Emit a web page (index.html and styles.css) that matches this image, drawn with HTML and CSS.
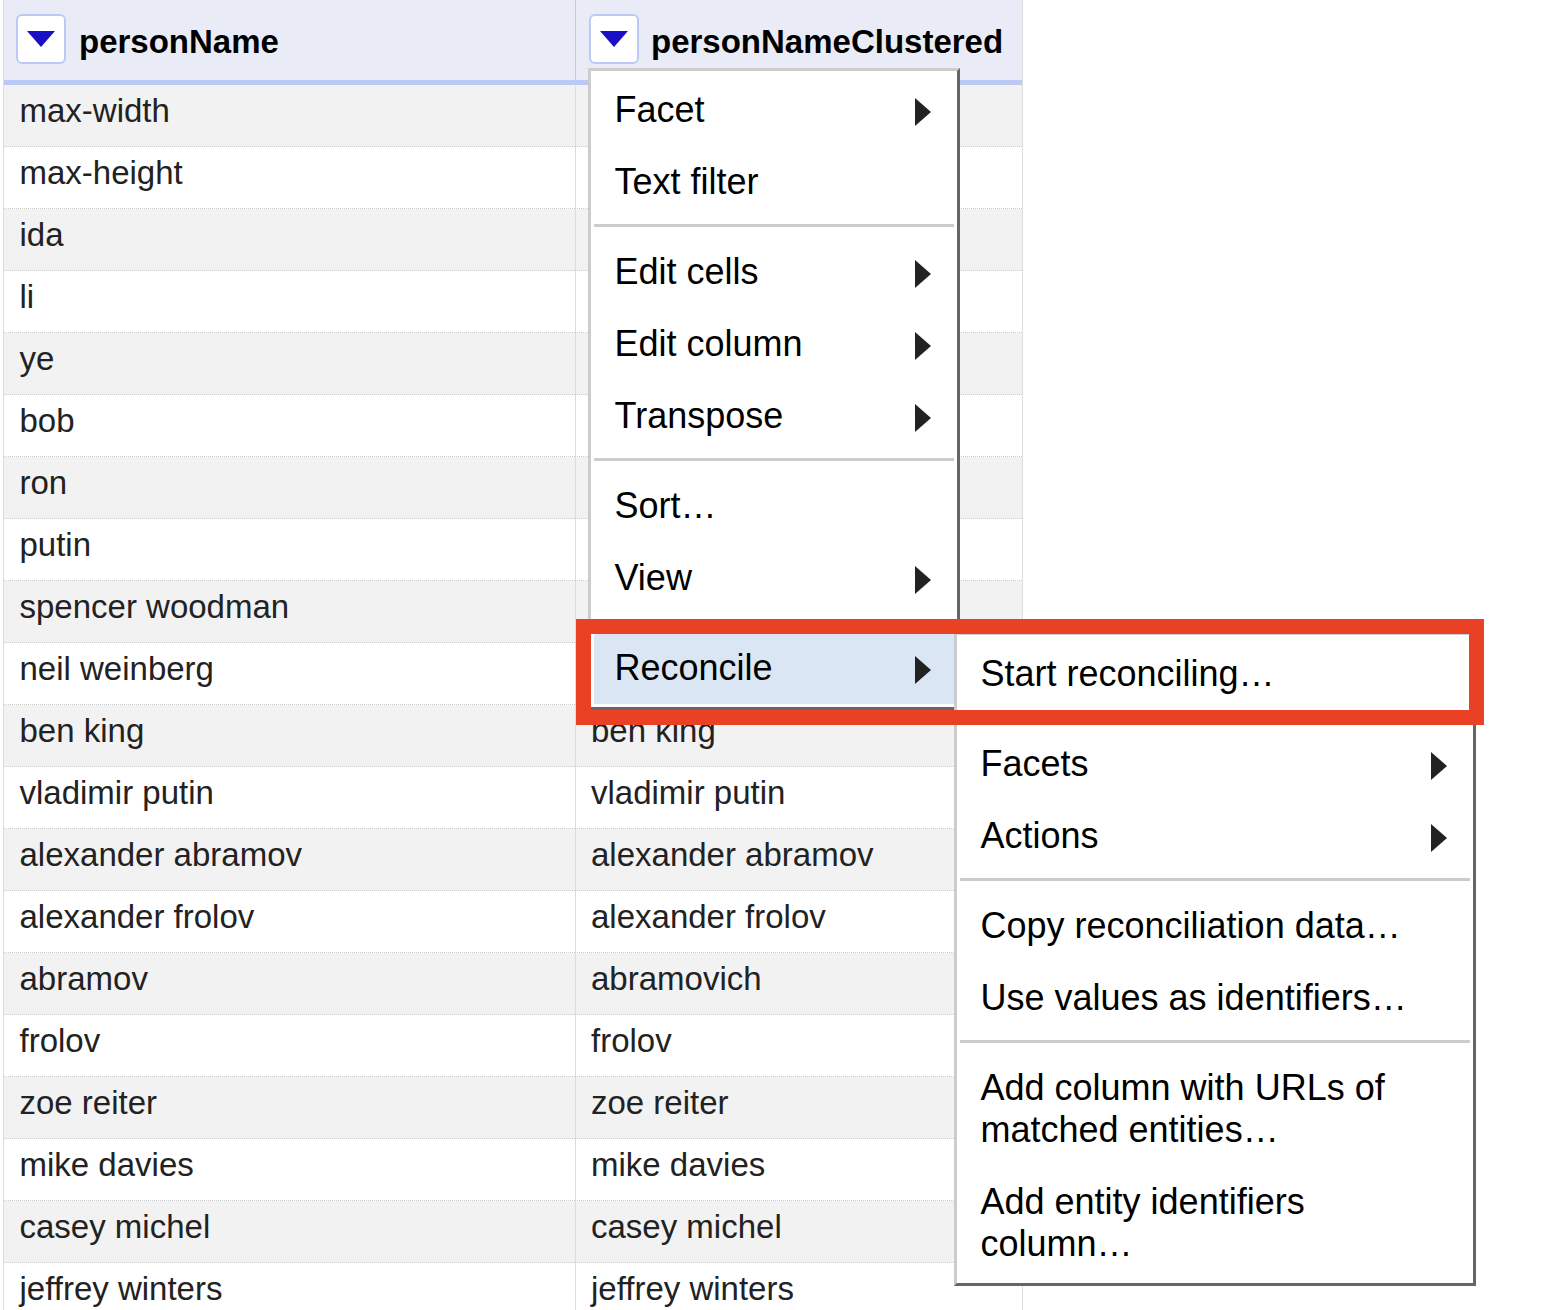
FILE: index.html
```html
<!DOCTYPE html>
<html lang="en">
<head>
<meta charset="utf-8">
<title>Reconcile menu</title>
<link rel="stylesheet" href="styles.css">
</head>
<body>
<div class="page">
  <table class="data">
    <thead>
      <tr>
        <th><div class="head"><span class="dropdown"><svg width="28" height="16" viewBox="0 0 28 16"><polygon points="0,0 28,0 14,16" fill="#1a0fc4"/></svg></span>personName</div></th>
        <th><div class="head head-second"><span class="dropdown"><svg width="28" height="16" viewBox="0 0 28 16"><polygon points="0,0 28,0 14,16" fill="#1a0fc4"/></svg></span>personNameClustered</div></th>
      </tr>
    </thead>
    <tbody>
      <tr><td>max-width</td><td></td></tr>
      <tr><td>max-height</td><td></td></tr>
      <tr><td>ida</td><td></td></tr>
      <tr><td>li</td><td></td></tr>
      <tr><td>ye</td><td></td></tr>
      <tr><td>bob</td><td></td></tr>
      <tr><td>ron</td><td></td></tr>
      <tr><td>putin</td><td></td></tr>
      <tr><td>spencer woodman</td><td></td></tr>
      <tr><td>neil weinberg</td><td></td></tr>
      <tr><td>ben king</td><td>ben king</td></tr>
      <tr><td>vladimir putin</td><td>vladimir putin</td></tr>
      <tr><td>alexander abramov</td><td>alexander abramov</td></tr>
      <tr><td>alexander frolov</td><td>alexander frolov</td></tr>
      <tr><td>abramov</td><td>abramovich</td></tr>
      <tr><td>frolov</td><td>frolov</td></tr>
      <tr><td>zoe reiter</td><td>zoe reiter</td></tr>
      <tr><td>mike davies</td><td>mike davies</td></tr>
      <tr><td>casey michel</td><td>casey michel</td></tr>
      <tr><td>jeffrey winters</td><td>jeffrey winters</td></tr>
    </tbody>
  </table>

  <div class="menu menu-main">
    <div class="item">Facet<svg class="arrow" width="16" height="28" viewBox="0 0 16 28"><polygon points="0,0 16,14 0,28"/></svg></div>
    <div class="item">Text filter</div>
    <div class="sep"></div>
    <div class="item">Edit cells<svg class="arrow" width="16" height="28" viewBox="0 0 16 28"><polygon points="0,0 16,14 0,28"/></svg></div>
    <div class="item">Edit column<svg class="arrow" width="16" height="28" viewBox="0 0 16 28"><polygon points="0,0 16,14 0,28"/></svg></div>
    <div class="item">Transpose<svg class="arrow" width="16" height="28" viewBox="0 0 16 28"><polygon points="0,0 16,14 0,28"/></svg></div>
    <div class="sep"></div>
    <div class="item">Sort…</div>
    <div class="item">View<svg class="arrow" width="16" height="28" viewBox="0 0 16 28"><polygon points="0,0 16,14 0,28"/></svg></div>
    <div class="sep"></div>
    <div class="item active">Reconcile<svg class="arrow" width="16" height="28" viewBox="0 0 16 28"><polygon points="0,0 16,14 0,28"/></svg></div>
  </div>

  <div class="menu menu-sub">
    <div class="item">Start reconciling…</div>
    <div class="sep"></div>
    <div class="item">Facets<svg class="arrow" width="16" height="28" viewBox="0 0 16 28"><polygon points="0,0 16,14 0,28"/></svg></div>
    <div class="item">Actions<svg class="arrow" width="16" height="28" viewBox="0 0 16 28"><polygon points="0,0 16,14 0,28"/></svg></div>
    <div class="sep"></div>
    <div class="item">Copy reconciliation data…</div>
    <div class="item">Use values as identifiers…</div>
    <div class="sep"></div>
    <div class="item wrap">Add column with URLs of matched entities…</div>
    <div class="item wrap">Add entity identifiers column…</div>
  </div>

  <div class="callout"></div>
</div>
</body>
</html>
```
FILE: styles.css
```css
html, body {
  margin: 0;
  padding: 0;
  background: #fff;
}

.page {
  position: relative;
  width: 1554px;
  height: 1310px;
  overflow: hidden;
  font-family: "Liberation Sans", Arial, sans-serif;
}

.data {
  margin-left: 3px;
  width: 1020px;
  table-layout: fixed;
  border-collapse: separate;
  border-spacing: 0;
  border-left: 1px solid #ddd;
  border-right: 1px solid #ddd;
  font-size: 33px;
  color: #222;
}

.data th {
  height: 80px;
  padding: 0;
  background: #e9ecf6;
  border-bottom: 5px solid #bcc9f5;
  color: #000;
  font-weight: bold;
  text-align: left;
}

.data th:first-child {
  width: 571px;
}

.data th + th {
  border-left: 1px solid #bcc9f5;
}

.head {
  display: flex;
  align-items: center;
  gap: 13px;
  padding: 3px 0 0 12px;
}

.head-second {
  gap: 12px;
  padding-left: 13px;
}

.dropdown {
  box-sizing: border-box;
  width: 50px;
  height: 50px;
  margin-bottom: 6px;
  display: flex;
  align-items: center;
  justify-content: center;
  background: #fff;
  border: 2px solid #bcc9f5;
  border-radius: 6px;
}

.data td {
  box-sizing: border-box;
  height: 62px;
  padding: 0 0 10px 15.5px;
  border-bottom: 1px dotted #ccc;
  white-space: nowrap;
}

.data td + td {
  padding-left: 15px;
  border-left: 1px solid #ddd;
}

.data tbody tr:nth-child(odd) td {
  background: #f2f2f2;
}

.menu {
  position: absolute;
  box-sizing: border-box;
  padding: 3px;
  background: #fff;
  border: 3px solid;
  border-color: #ccc #666 #666 #ccc;
  color: #000;
  font-size: 36px;
  line-height: 42px;
}

.menu-main {
  left: 588px;
  top: 68px;
  width: 372px;
}

.menu-sub {
  left: 954px;
  top: 632px;
  width: 522px;
}

.item {
  display: flex;
  align-items: center;
  justify-content: space-between;
  padding: 15px 23px 15px 20.5px;
}

.item.wrap {
  padding-right: 60px;
}

.item.active {
  background: #dbe6f5;
}

.arrow {
  flex: none;
  margin-top: 3px;
  fill: #222;
}

.sep {
  height: 3px;
  margin: 6px 0 9px;
  background: #ccc;
}

.callout {
  position: absolute;
  box-sizing: border-box;
  left: 575.5px;
  top: 618.5px;
  width: 908px;
  height: 106px;
  border: 15px solid #ea4125;
}
```
